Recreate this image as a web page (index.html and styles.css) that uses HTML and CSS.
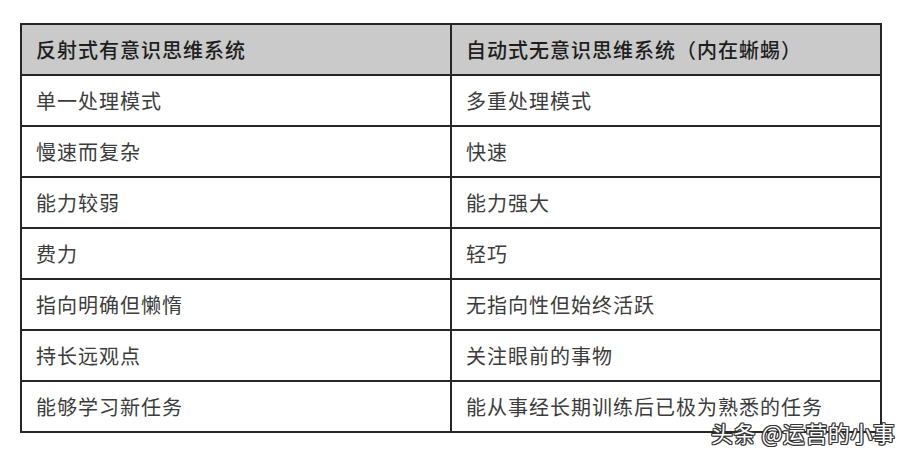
FILE: index.html
```html
<!DOCTYPE html>
<html lang="zh">
<head>
<meta charset="utf-8">
<link rel="stylesheet" href="styles.css">
</head>
<body>
<div class="page">
  <table class="cmp">
    <thead>
      <tr><th>反射式有意识思维系统</th><th>自动式无意识思维系统（内在蜥蜴）</th></tr>
    </thead>
    <tbody>
      <tr><td>单一处理模式</td><td>多重处理模式</td></tr>
      <tr><td>慢速而复杂</td><td>快速</td></tr>
      <tr><td>能力较弱</td><td>能力强大</td></tr>
      <tr><td>费力</td><td>轻巧</td></tr>
      <tr><td>指向明确但懒惰</td><td>无指向性但始终活跃</td></tr>
      <tr><td>持长远观点</td><td>关注眼前的事物</td></tr>
      <tr><td>能够学习新任务</td><td>能从事经长期训练后已极为熟悉的任务</td></tr>
    </tbody>
  </table>
  <div class="mark">头条 @运营的小事</div>
</div>
</body>
</html>
```
FILE: styles.css
```css
html, body {
  margin: 0;
  padding: 0;
  background: #ffffff;
}
.page {
  position: relative;
  width: 916px;
  height: 458px;
  padding: 23px 0 0 20px;
  box-sizing: border-box;
  font-family: "Noto Sans CJK SC", sans-serif;
}
.cmp {
  border-collapse: collapse;
  width: 862px;
  table-layout: fixed;
}
.cmp th, .cmp td {
  border: 2px solid #262626;
  height: 51px;
  padding: 0 0 0 14px;
  text-align: left;
  font-size: 20px;
  letter-spacing: 1px;
  line-height: 24px;
  box-sizing: border-box;
}
.cmp th:first-child, .cmp td:first-child { width: 430px; }
.cmp th {
  background: #c9cac9;
  color: #1e1e1e;
  font-weight: 500;
}
.cmp td {
  color: #3c3c3c;
  font-weight: 400;
}
.mark {
  position: absolute;
  left: 711px;
  top: 416px;
  font-size: 22px;
  line-height: 32px;
  color: #ffffff;
  letter-spacing: 0.5px;
  text-shadow: -1px -1px 0 #333, 1px -1px 0 #333, -1px 1px 0 #333, 1px 1px 0 #333, 0 1px 0 #333, 0 -1px 0 #333, 1px 0 0 #333, -1px 0 0 #333;
}
```
